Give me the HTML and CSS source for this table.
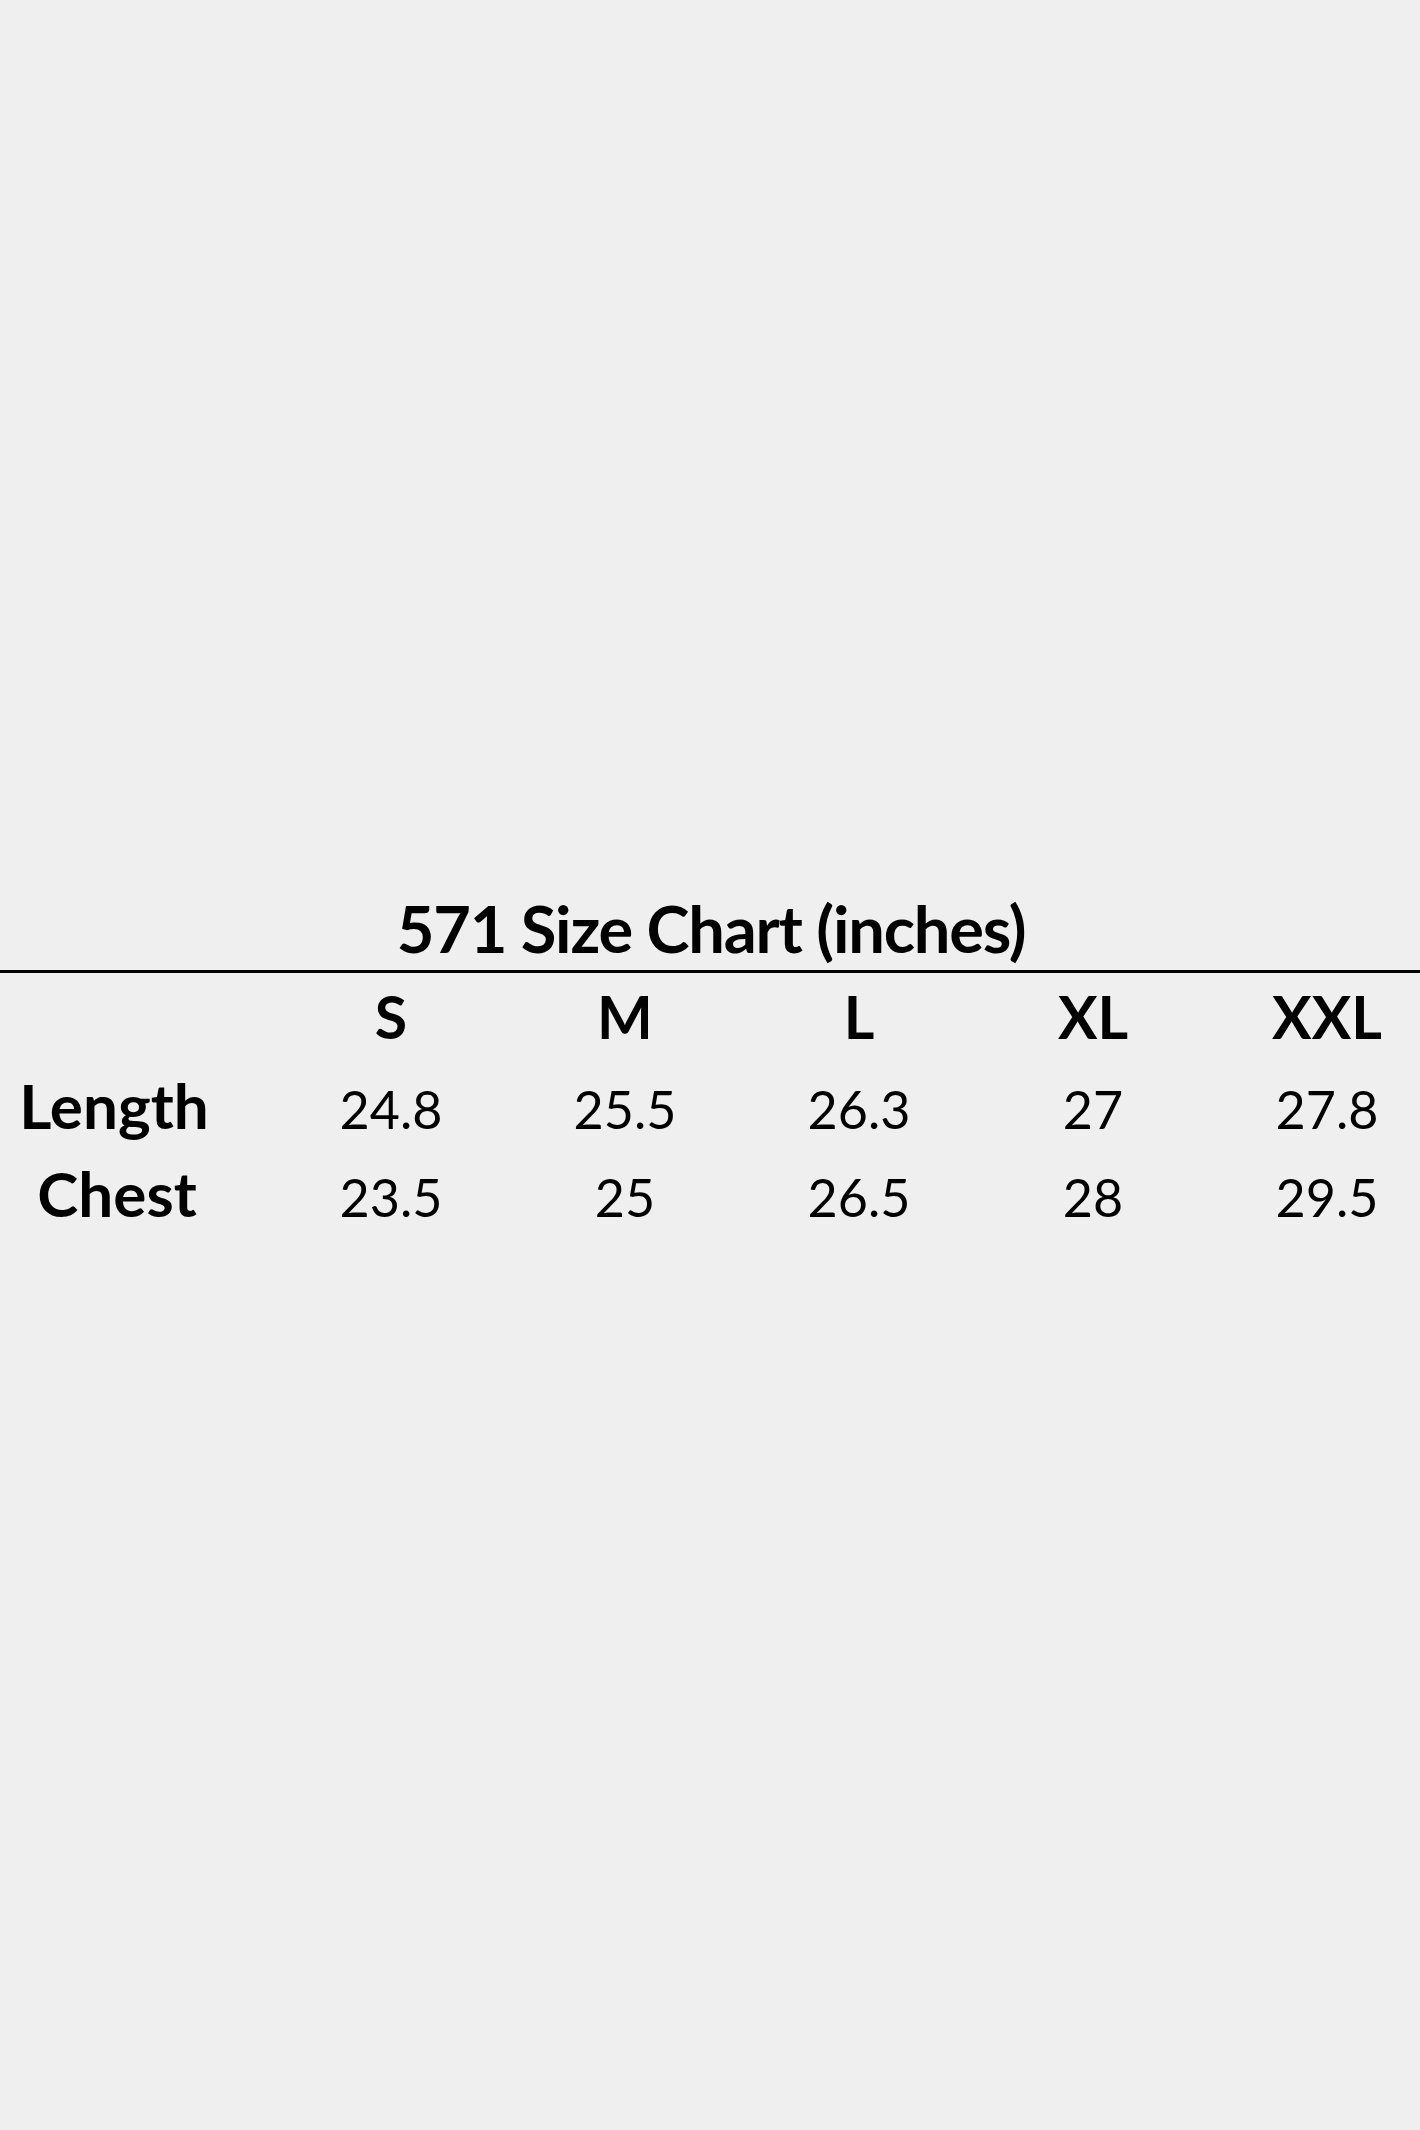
FILE: index.html
```html
<!DOCTYPE html>
<html lang="en">
<head>
<meta charset="utf-8">
<title>571 Size Chart</title>
<link rel="stylesheet" href="styles.css">
</head>
<body>
<main class="page">
  <section class="chart">
    <h1 class="chart-title">571 Size Chart (inches)</h1>
    <div class="row row-head">
      <div class="cell label"></div>
      <div class="cell">S</div>
      <div class="cell">M</div>
      <div class="cell">L</div>
      <div class="cell">XL</div>
      <div class="cell">XXL</div>
    </div>
    <div class="row">
      <div class="cell label">Length</div>
      <div class="cell num">24.8</div>
      <div class="cell num">25.5</div>
      <div class="cell num">26.3</div>
      <div class="cell num">27</div>
      <div class="cell num">27.8</div>
    </div>
    <div class="row">
      <div class="cell label label-chest">Chest</div>
      <div class="cell num">23.5</div>
      <div class="cell num">25</div>
      <div class="cell num">26.5</div>
      <div class="cell num">28</div>
      <div class="cell num">29.5</div>
    </div>
  </section>
</main>
</body>
</html>
```
FILE: styles.css
```css
html, body {
  margin: 0;
  padding: 0;
  background: #efefef;
  overflow: hidden;
}
.page {
  width: 1420px;
  height: 2130px;
  font-family: Lato, "Open Sans", sans-serif;
  color: #000;
  padding-top: 888px;
  box-sizing: border-box;
}
.chart-title {
  margin: 0;
  font-size: 65px;
  line-height: 80px;
  font-weight: 700;
  letter-spacing: -1.2px;
  text-align: center;
  padding: 0 0 2px 2px;
  border-bottom: 3px solid #000;
}
.row {
  display: grid;
  grid-template-columns: 274px repeat(5, 234px);
  height: 88px;
  align-items: baseline;
}
.cell {
  text-align: center;
  font-weight: 700;
  font-size: 59px;
  line-height: 88px;
}
.label {
  padding-right: 46px;
  font-size: 62px;
}
.label-chest {
  padding-left: 2px;
  padding-right: 42px;
}
.num {
  font-weight: 400;
  font-size: 52px;
}
```
